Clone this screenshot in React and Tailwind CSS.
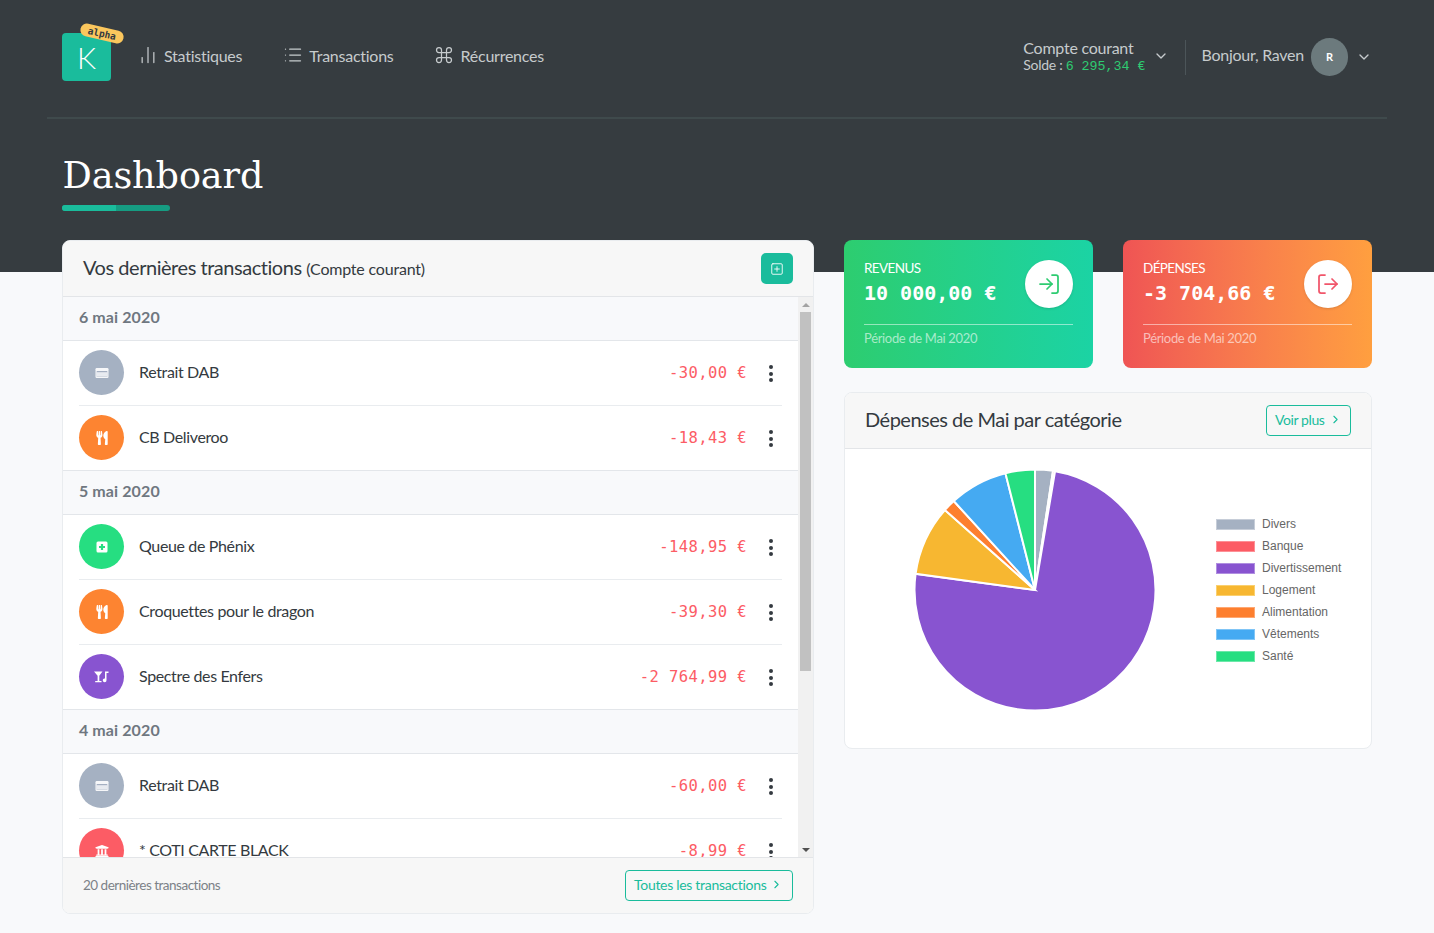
import React from "react";
import { BarChart2, List, Command, ChevronDown, ChevronRight, SquarePlus, LogIn, LogOut } from "lucide-react";
import { FaUtensils, FaUniversity } from "react-icons/fa";

const SANS = "[font-family:Lato,sans-serif]";

const CardIcon = () => (
  <svg width="14" height="14" viewBox="0 0 14 14" fill="none">
    <rect x="0.5" y="2" width="13" height="10" rx="1.2" fill="#fff" fillOpacity="0.9" />
    <rect x="1.7" y="5" width="10.6" height="5.8" fill="#a5b0c2" />
    <rect x="1.7" y="6.2" width="10.6" height="4.4" fill="#fff" fillOpacity="0.75" />
  </svg>
);
const MedIcon = () => (
  <svg width="12" height="12" viewBox="0 0 12 12">
    <rect x="0.5" y="0.5" width="11" height="11" rx="1.5" fill="#fff" />
    <path d="M6 3v6M3 6h6" stroke="#26de81" strokeWidth="2.2" />
  </svg>
);
const FunIcon = () => (
  <svg width="15" height="12" viewBox="0 0 15 12" fill="#fff">
    <path d="M0 0.5h8.5L5.3 4.8V10h2.2v1.2H1.2V10h2.4V4.8z" />
    <path d="M11 .5h3.5v1.6h-2V9.3a1.9 1.9 0 1 1-1.5-1.8z" />
  </svg>
);
const Utensils = () => <FaUtensils size={14} color="#fff" />;
const Bank = () => <FaUniversity size={14} color="#fff" />;

const groups = [
  { date: "6 mai 2020", rows: [
    { icon: CardIcon, bg: "bg-[#a5b1c2]", name: "Retrait DAB", amt: "-30,00 €" },
    { icon: Utensils, bg: "bg-[#fd8431]", name: "CB Deliveroo", amt: "-18,43 €" },
  ]},
  { date: "5 mai 2020", rows: [
    { icon: MedIcon, bg: "bg-[#26de81]", name: "Queue de Phénix", amt: "-148,95 €" },
    { icon: Utensils, bg: "bg-[#fd8431]", name: "Croquettes pour le dragon", amt: "-39,30 €" },
    { icon: FunIcon, bg: "bg-[#8854d0]", name: "Spectre des Enfers", amt: "-2 764,99 €" },
  ]},
  { date: "4 mai 2020", rows: [
    { icon: CardIcon, bg: "bg-[#a5b1c2]", name: "Retrait DAB", amt: "-60,00 €" },
    { icon: Bank, bg: "bg-[#fc5c65]", name: "* COTI CARTE BLACK", amt: "-8,99 €" },
  ]},
];

function Dots() {
  return (
    <div className="flex flex-col gap-[2.5px] items-center w-[4px]">
      <span className="w-[4px] h-[4px] rounded-full bg-[#343a40]" />
      <span className="w-[4px] h-[4px] rounded-full bg-[#343a40]" />
      <span className="w-[4px] h-[4px] rounded-full bg-[#343a40]" />
    </div>
  );
}

function Row({ r, last }) {
  const I = r.icon;
  return (
    <div className={`flex items-center ${last ? "h-[64px]" : "h-[65px] border-b border-[#e9ecef]"}`}>
      <div className={`w-[45px] h-[45px] mt-[-1px] rounded-full flex items-center justify-center shrink-0 ${r.bg}`}>
        <I />
      </div>
      <span className="ml-[15px] mt-[-2px] text-[16px] text-[#343a40] tracking-[-0.36px]">{r.name}</span>
      <span className="ml-auto mt-[1px] [font-family:'DejaVu_Sans_Mono',monospace] text-[15.5px] tracking-[0.42px] text-[#fc5c65]">{r.amt}</span>
      <div className="ml-[22px] mr-[9px] mt-[1px]"><Dots /></div>
    </div>
  );
}

const slices = [
  { c: "#a5b1c2", a: 8.6 },
  { c: "#fc5c65", a: 1 },
  { c: "#8854d0", a: 268.1 },
  { c: "#f7b731", a: 33.9 },
  { c: "#fd7f2f", a: 6 },
  { c: "#45aaf2", a: 28.2 },
  { c: "#26de81", a: 14.2 },
];

function Pie() {
  const R = 120.5, C = 122;
  let start = 0;
  const pt = (a) => {
    const t = (a * Math.PI) / 180;
    return `${(C + R * Math.sin(t)).toFixed(2)} ${(C - R * Math.cos(t)).toFixed(2)}`;
  };
  return (
    <svg width="244" height="244" viewBox="0 0 244 244">
      {slices.map((s) => {
        const end = start + s.a;
        const d = `M${C} ${C}L${pt(start)}A${R} ${R} 0 ${s.a > 180 ? 1 : 0} 1 ${pt(end)}Z`;
        start = end;
        return <path key={s.c} d={d} fill={s.c} stroke="#fff" strokeWidth="2" strokeLinejoin="miter" />;
      })}
    </svg>
  );
}

const legend = [
  ["Divers", "bg-[#a5b1c2]", "border-[#c6cdd8]"],
  ["Banque", "bg-[#fc5c65]", "border-[#fd9096]"],
  ["Divertissement", "bg-[#8854d0]", "border-[#b08fe0]"],
  ["Logement", "bg-[#f7b731]", "border-[#fad06f]"],
  ["Alimentation", "bg-[#fd7f2f]", "border-[#fea873]"],
  ["Vêtements", "bg-[#45aaf2]", "border-[#80c5f6]"],
  ["Santé", "bg-[#26de81]", "border-[#6ce8a9]"],
];

function StatCard({ title, value, gradient, Icon, iconColor }) {
  return (
    <div className={`flex-1 h-[128px] rounded-[8px] px-[20px] pt-[20px] text-white ${gradient}`}>
      <div className="flex justify-between h-[64px] border-b border-white/50 box-content">
        <div>
          <div className="text-[13.5px] leading-[17px] tracking-[-0.6px]">{title}</div>
          <div className="[font-family:'DejaVu_Sans_Mono',monospace] font-bold text-[20px] leading-[26px] mt-[3px]">{value}</div>
        </div>
        <div className="w-[48px] h-[48px] rounded-full bg-white flex items-center justify-center shadow-sm shrink-0">
          <Icon size={24} color={iconColor} strokeWidth={1.75} />
        </div>
      </div>
      <div className="text-[13px] leading-[17px] mt-[5px] text-white/60 tracking-[-0.33px]">Période de Mai 2020</div>
    </div>
  );
}

export default function App() {
  return (
    <div className={`${SANS} min-h-[933px] bg-[#f8f9fb] overflow-hidden`}>
      <div className="bg-[#363c40] h-[272px] px-[47px]">
        <div className="h-[119px] border-b-2 border-[#3f4a4c] flex items-center pl-[15px] pr-[15px]">
          <div className="relative w-[49px] h-[48px] mt-[-3px] rounded-[4px] bg-[#1abc9c] flex items-center justify-center text-white">
            <span className="text-[30px] font-light leading-none">K</span>
            <span className="absolute top-[-6px] left-[18px] w-[44px] h-[13px] rounded-[7px] bg-[#fbc75d] rotate-[13deg] text-[#343a40] [font-family:'DejaVu_Sans_Mono',monospace] font-bold text-[9.5px] leading-[13px] text-center">alpha</span>
          </div>
          <nav className="flex items-center ml-[27px] mt-[-5px] text-[#c6cbcd] text-[16px] tracking-[-0.25px]">
            <a className="flex items-center gap-[6px]"><BarChart2 size={20} strokeWidth={1.5} className="mt-[-2px]" />Statistiques</a>
            <a className="flex items-center gap-[6.5px] ml-[40.5px]"><List size={20} strokeWidth={1.5} className="mt-[-2px]" />Transactions</a>
            <a className="flex items-center gap-[7px] ml-[40px]"><Command size={20} strokeWidth={1.5} className="mt-[-2px]" />Récurrences</a>
          </nav>
          <div className="ml-auto flex items-center text-[#c6cbcd] mt-[-3px]">
            <div>
              <div className="text-[16px] leading-[18px] tracking-[-0.25px]">Compte courant</div>
              <div className="text-[14px] leading-[16px] tracking-[-0.3px]">Solde : <span className="[font-family:'Liberation_Mono',monospace] text-[13.3px] tracking-[0px] text-[#2ecc71]">6 295,34 €</span></div>
            </div>
            <ChevronDown size={16} className="ml-[8px] mt-[-3px]" />
            <div className="w-px h-[35px] bg-[#4c5559] ml-[16px] mr-[15px]" />
            <span className="text-[16px] tracking-[-0.25px] mt-[-5px]">Bonjour, Raven</span>
            <div className="w-[37px] h-[38px] rounded-full bg-[#6c7a7d] ml-[7px] flex items-center justify-center text-white text-[11px] font-bold">R</div>
            <ChevronDown size={16} className="ml-[8px]" />
          </div>
        </div>
        <h1 className="[font-family:'DejaVu_Serif',serif] text-[36.6px] leading-[44px] text-white ml-[15.5px] mt-[35px] tracking-[-0.1px]">Dashboard</h1>
        <div className="ml-[15px] mt-[7px] w-[108px] h-[6px] rounded-[3px] overflow-hidden bg-[#169c82]">
          <div className="w-[54px] h-full bg-[#1abc9c]" />
        </div>
      </div>

      <div className="flex items-start gap-[30px] mx-[62px] mt-[-32px]">
        <section className="w-[752px] shrink-0 h-[674px] flex flex-col rounded-[8px] border border-[#e9ecef] bg-white overflow-hidden">
          <div className="h-[56px] shrink-0 bg-[#f7f7f7] border-b border-[#e3e5e8] flex items-center pl-[20px] pr-[20px]">
            <span className="text-[20px] text-[#343a40] tracking-[-0.46px] mt-[-3px]">Vos dernières transactions <span className="text-[16px] tracking-[-0.2px]">(Compte courant)</span></span>
            <button className="ml-auto w-[32px] h-[31px] rounded-[5px] bg-[#1abc9c] flex items-center justify-center">
              <SquarePlus size={14} color="#fff" strokeWidth={1.5} />
            </button>
          </div>
          <div className="flex-1 min-h-0 flex">
            <div className="flex-1 min-w-0 overflow-hidden">
              {groups.map((g) => (
                <div key={g.date}>
                  <div className="h-[44px] bg-[#f8f9fb] border-b border-[#e3e6ea] flex items-center px-[16px] pb-[3px] text-[16px] font-bold text-[#6f7780] tracking-[0.1px]">{g.date}</div>
                  <div className="px-[16px] border-b border-[#e3e6ea]">
                    {g.rows.map((r, i) => <Row key={i} r={r} last={i === g.rows.length - 1} />)}
                  </div>
                </div>
              ))}
            </div>
            <div className="w-[15px] shrink-0 bg-[#f1f1f1] flex flex-col items-center">
              <div className="h-[15px] w-full flex items-center justify-center">
                <span className="w-0 h-0 border-x-[4px] border-x-transparent border-b-[4px] border-b-[#a3a3a3]" />
              </div>
              <div className="w-[11px] h-[359px] bg-[#c1c1c1]" />
              <div className="mt-auto h-[15px] w-full flex items-center justify-center">
                <span className="w-0 h-0 border-x-[4px] border-x-transparent border-t-[4px] border-t-[#505050]" />
              </div>
            </div>
          </div>
          <div className="h-[56px] shrink-0 bg-[#f7f7f7] border-t border-[#e3e5e8] flex items-center pl-[20px] pr-[20px]">
            <span className="text-[13.5px] text-[#7c8288] tracking-[-0.5px]">20 dernières transactions</span>
            <a className="ml-auto h-[31px] w-[168px] rounded-[4px] border border-[#1abc9c] text-[#1abc9c] text-[14px] tracking-[-0.3px] flex items-center pl-[8px] gap-[4px]">
              <span className="mt-[-2px]">Toutes les transactions</span> <ChevronRight size={13} className="mt-[-2px]" />
            </a>
          </div>
        </section>

        <div className="w-[528px] shrink-0 flex flex-col gap-[24px]">
          <div className="flex gap-[30px]">
            <StatCard title="REVENUS" value="10 000,00 €" gradient="bg-linear-to-r from-[#2dcd6f] to-[#1bd3a4]" Icon={LogIn} iconColor="#2ecc71" />
            <StatCard title="DÉPENSES" value="-3 704,66 €" gradient="bg-linear-to-r from-[#ef5454] to-[#ff9f3f]" Icon={LogOut} iconColor="#f1556a" />
          </div>
          <section className="h-[357px] rounded-[8px] border border-[#e9ecef] bg-white overflow-hidden">
            <div className="h-[56px] bg-[#f7f7f7] border-b border-[#e3e5e8] flex items-center pl-[20px] pr-[20px]">
              <span className="text-[20px] text-[#343a40] tracking-[-0.5px] mt-[-3px]">Dépenses de Mai par catégorie</span>
              <a className="ml-auto h-[31px] w-[85px] rounded-[4px] border border-[#1abc9c] text-[#1abc9c] text-[14px] tracking-[-0.4px] flex items-center pl-[8px] gap-[4px]">
                <span className="mt-[-2px]">Voir plus</span> <ChevronRight size={13} className="mt-[-2px]" />
              </a>
            </div>
            <div className="flex">
              <div className="ml-[68px] mt-[19px]"><Pie /></div>
              <ul className="ml-[59px] mt-[64px] [font-family:'Liberation_Sans',sans-serif] text-[12px] text-[#666]">
                {legend.map(([l, bg, b]) => (
                  <li key={l} className="flex items-center h-[22px]">
                    <span className={`w-[39px] h-[11px] border ${bg} ${b}`} />
                    <span className="ml-[7px]">{l}</span>
                  </li>
                ))}
              </ul>
            </div>
          </section>
        </div>
      </div>
    </div>
  );
}
